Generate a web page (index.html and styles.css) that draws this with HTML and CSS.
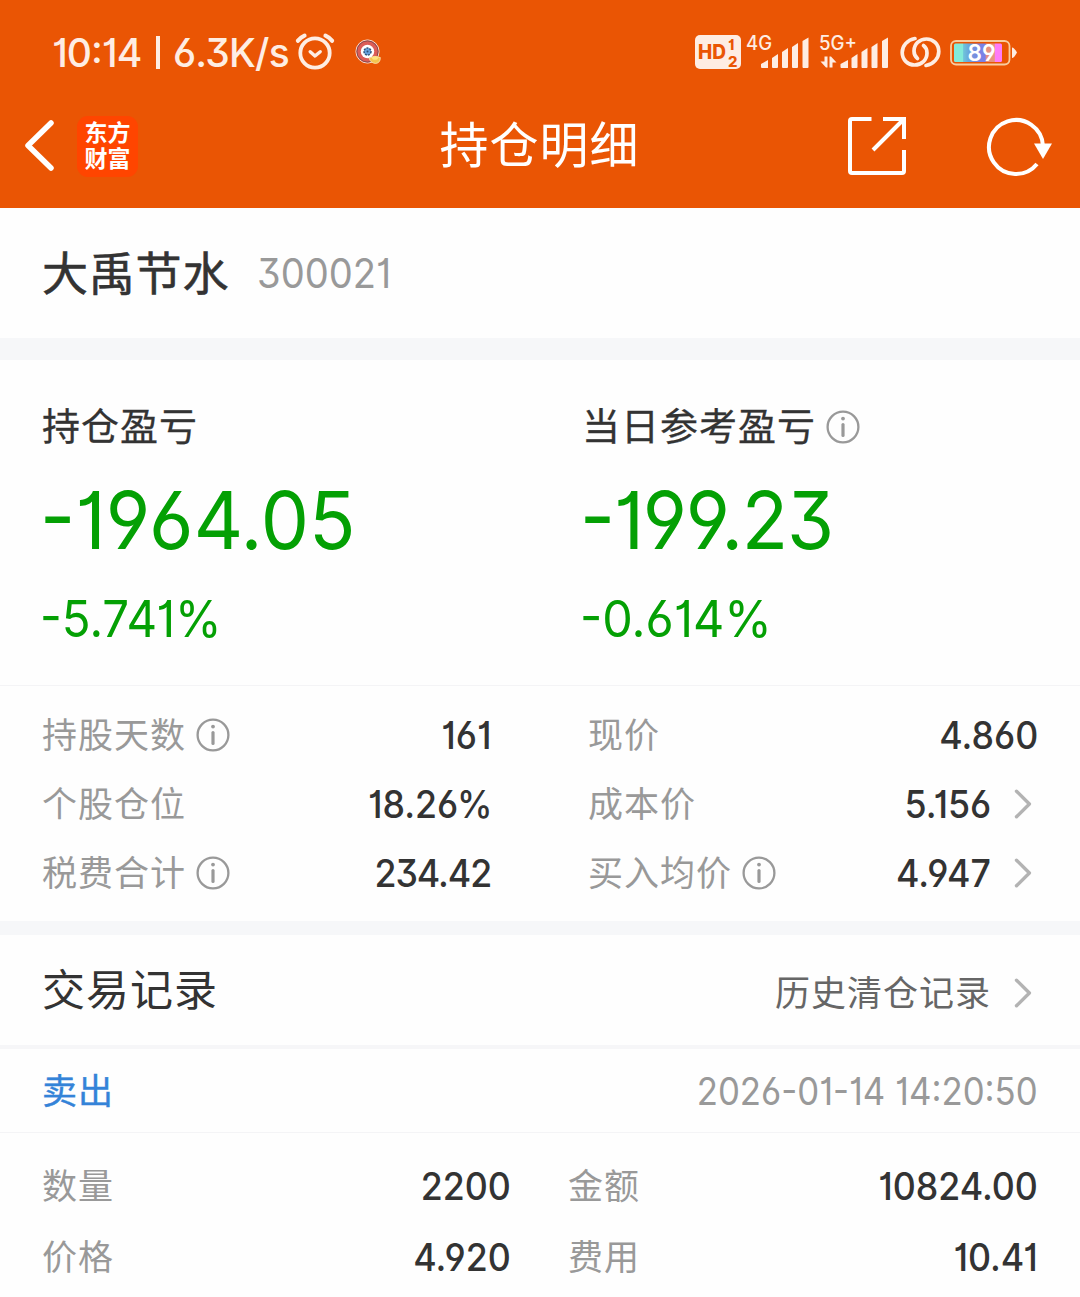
FILE: index.html
```html
<!DOCTYPE html>
<html lang="zh-CN">
<head>
<meta charset="utf-8">
<title>持仓明细</title>
<link rel="stylesheet" href="styles.css">
</head>
<body>
<svg width="0" height="0" class="defs">
  <symbol id="info" viewBox="0 0 34 34"><circle cx="17" cy="17" r="15.4" fill="none" stroke="#999" stroke-width="2.3"/><circle cx="17" cy="8.6" r="1.9" fill="#999"/><path d="M17 14.5V25.5" stroke="#999" stroke-width="3.2" stroke-linecap="round"/></symbol>
  <symbol id="chevron" viewBox="0 0 18 30"><path d="M2.5 2.2L15.4 15L2.5 27.8" fill="none" stroke="#b3b3b3" stroke-width="3.4" stroke-linecap="round" stroke-linejoin="round"/></symbol>
</svg>
<header class="header">
  <div class="status">
    <span class="clock">10:14</span><span class="divider"></span><span class="speed">6.3K/s</span>
    <svg class="alarm" width="40" height="40" viewBox="0 0 40 40" fill="none" stroke="#feede3" stroke-linecap="round" stroke-linejoin="round"><circle cx="20" cy="21" r="14.7" stroke-width="3.8"/><path d="M2.9 8.8Q5.3 5.4 9.5 3.6M37.1 8.8Q34.7 5.4 30.5 3.6" stroke-width="4.2"/><path d="M15.2 19.7L20 24L25.2 19.7" stroke-width="3.4"/></svg>
    <svg class="app" width="26" height="26" viewBox="0 0 26 26"><circle cx="12.5" cy="12.5" r="11.6" fill="#dc5d57" stroke="#f6d9cb" stroke-width="1"/><circle cx="12.5" cy="12.5" r="10.6" fill="none" stroke="#70464c" stroke-width=".8"/><circle cx="12.5" cy="12.5" r="6.7" fill="#fff"/><circle cx="12.5" cy="12.5" r="3.5" fill="#66a2df" stroke="#315578" stroke-width="1.5" stroke-dasharray="2 1"/><circle cx="12.5" cy="12.5" r="1" fill="#315578"/><path d="M14 19Q20 16 25.3 18.5Q25.5 24 20.5 24.5Q15.5 24 14 19Z" fill="#f3c551" stroke="#fae5b4" stroke-width=".8"/><ellipse cx="20" cy="19" rx="3" ry="1.8" fill="#ffe47d"/></svg>
    <div class="system">
      <svg width="46" height="40" viewBox="0 0 46 40"><rect y="3" width="46" height="34" rx="5" fill="#feede3"/><g fill="#ea5504" font-weight="800"><text x="3" y="27.3" font-size="19.5" textLength="28" lengthAdjust="spacingAndGlyphs">HD</text><text x="33.2" y="17.5" font-size="14">1</text><text x="33" y="34.5" font-size="14" textLength="9.5" lengthAdjust="spacingAndGlyphs">2</text></g></svg>
      <svg class="sig4" width="63" height="40" viewBox="0 0 63 40" fill="#feede3"><text x="0" y="17.5" font-size="19.5" font-weight="500" textLength="26" lengthAdjust="spacingAndGlyphs">4G</text><path d="M15 32L22 28V36H16Q15 36 15 35ZM26 26L32 22V35Q32 36 31 36H27Q26 36 26 35ZM36 20L42 16V35Q42 36 41 36H37Q36 36 36 35ZM46 15L52 11V35Q52 36 51 36H47Q46 36 46 35ZM56.5 9L62.5 5.5V35Q62.5 36 61.5 36H57.5Q56.5 36 56.5 35Z"/></svg>
      <svg class="sig5" width="70" height="40" viewBox="0 0 70 40" fill="#feede3"><text x="0" y="17.5" font-size="19.5" font-weight="500" textLength="38" lengthAdjust="spacingAndGlyphs">5G+</text><path d="M21.5 32L29 28V36H22.5Q21.5 36 21.5 35ZM32.5 26L38.5 22V35Q38.5 36 37.5 36H33.5Q32.5 36 32.5 35ZM42.5 20L48.5 16V35Q48.5 36 47.5 36H43.5Q42.5 36 42.5 35ZM52.5 15L58.5 11V35Q58.5 36 57.5 36H53.5Q52.5 36 52.5 35ZM63 9L69 5.5V35Q69 36 68 36H64Q63 36 63 35Z"/><path d="M1.5 29.5H5.5V24.5H8.5V35.5H7ZM10.5 35.5V24.5H12L17.5 30.5H13.5V35.5Z"/></svg>
      <svg class="link" width="42" height="40" viewBox="0 0 42 40" fill="none" stroke="#feede3" stroke-width="3.7" stroke-linecap="round"><path d="M15 6.5C7 8 2.2 14 2.2 20.5C2.2 28 8 33 14.5 33C21.5 33 27 28 27 21C27 17.5 25.5 15 23.5 13.5"/><path d="M26 33.5C34 32 38.8 26 38.8 19.5C38.8 12 33 7 26.5 7C19.5 7 14 12 14 19C14 22.5 15.5 25 17.5 26.5"/></svg>
      <svg class="battery" width="68" height="40" viewBox="0 0 68 40"><defs><linearGradient id="charge"><stop offset="0" stop-color="#83ead9"/><stop offset=".18" stop-color="#83ead9"/><stop offset=".2" stop-color="#6fc3da"/><stop offset=".3" stop-color="#68a9dc"/><stop offset=".48" stop-color="#7b86df"/><stop offset=".65" stop-color="#7980ea"/><stop offset=".67" stop-color="#e58f83"/><stop offset=".84" stop-color="#e6957e"/><stop offset=".86" stop-color="#ff7bf8"/></linearGradient></defs><rect x="1" y="9" width="58.5" height="23.5" rx="5" fill="none" stroke="#f8cda0" stroke-width="1.8"/><rect x="4" y="11.5" width="48" height="18.5" rx="1.5" fill="url(#charge)"/><path d="M62 15.5Q64 15.5 67 20.5Q64 26 62 26Z" fill="#feede3"/><text x="17.5" y="29" font-size="23.5" font-weight="600" fill="#fff" textLength="28" lengthAdjust="spacingAndGlyphs">89</text></svg>
    </div>
  </div>
  <nav class="nav">
    <div class="nav-left">
      <svg width="32" height="54" viewBox="0 0 32 54" fill="none" stroke="#fff" stroke-width="5.5" stroke-linejoin="round" stroke-linecap="round"><path d="M27 4L4 26.5L27 49"/></svg>
      <div class="logo"><span>东方</span><span>财富</span></div>
    </div>
    <h1>持仓明细</h1>
    <div class="nav-right">
      <svg width="58" height="58" viewBox="0 0 58 58" fill="none" stroke="#fff" stroke-width="4"><path d="M23.5 2H4Q2 2 2 4V54Q2 56 4 56H54Q56 56 56 54V33M35 2H56V22M55 3L25 33"/></svg>
      <svg width="66" height="58" viewBox="0 0 66 58"><path d="M50 47A27 27 0 1 1 56 29" fill="none" stroke="#fff" stroke-width="4"/><path d="M47 26.5H65L56 42Z" fill="#fff"/></svg>
    </div>
  </nav>
</header>
<section class="stock"><h2>大禹节水</h2><span class="code">300021</span></section>
<section class="summary">
  <div><h3>持仓盈亏</h3><p class="amount total">-1964.05</p><p class="percent total-rate">-5.741%</p></div>
  <div><h3>当日参考盈亏<svg class="info"><use href="#info"/></svg></h3><p class="amount daily">-199.23</p><p class="percent daily-rate">-0.614%</p></div>
</section>
<section class="metrics">
  <div class="cell"><span class="label">持股天数</span><svg class="info"><use href="#info"/></svg><b>161</b></div>
  <div class="cell"><span class="label">现价</span><b>4.860</b></div>
  <div class="cell"><span class="label">个股仓位</span><b class="ratio">18.26%</b></div>
  <div class="cell"><span class="label">成本价</span><b>5.156</b><svg class="chevron"><use href="#chevron"/></svg></div>
  <div class="cell"><span class="label">税费合计</span><svg class="info"><use href="#info"/></svg><b class="fees">234.42</b></div>
  <div class="cell"><span class="label">买入均价</span><svg class="info"><use href="#info"/></svg><b>4.947</b><svg class="chevron"><use href="#chevron"/></svg></div>
</section>
<section class="records"><h2>交易记录</h2><div class="history"><span>历史清仓记录</span><svg class="chevron"><use href="#chevron"/></svg></div></section>
<section class="trade-head"><span class="side">卖出</span><time>2026-01-14 14:20:50</time></section>
<section class="trade">
  <div class="cell"><span class="label">数量</span><b>2200</b></div>
  <div class="cell"><span class="label">金额</span><b>10824.00</b></div>
  <div class="cell"><span class="label">价格</span><b>4.920</b></div>
  <div class="cell"><span class="label">费用</span><b>10.41</b></div>
</section>
</body>
</html>
```

FILE: styles.css
```css
* { box-sizing: border-box; margin: 0; padding: 0; }
body {
  width: 1080px;
  height: 1297px;
  overflow: hidden;
  background: #fefefe;
  color: #333;
  font-family: Inter, "Noto Sans CJK SC", sans-serif;
  font-feature-settings: "case", "cv01", "cv03", "cv04", "cv09";
}
svg { display: block; flex: none; overflow: visible; }
.defs { position: absolute; }
h1, h2, h3 { font-weight: 400; }

.header { height: 208px; background: #ea5504; color: #fff; }
.status { display: flex; align-items: center; height: 104px; padding-left: 52px; color: #feede3; font-size: 39px; font-weight: 500; line-height: 48px; }
.clock { width: 104px; padding-top: 1px; white-space: nowrap; letter-spacing: -1px; }
.divider { width: 4px; height: 33px; background: #feede3; }
.speed { width: 122px; padding: 1px 0 0 13px; letter-spacing: -0.8px; white-space: nowrap; }
.alarm { margin-left: 13px; }
.app { margin-left: 20px; }
.system { display: flex; margin-left: auto; padding-right: 62px; }
.sig4 { margin-left: 5px; }
.sig5 { margin-left: 10px; }
.link { margin-left: 11px; }
.battery { margin-left: 8px; }

.nav { display: grid; grid-template-columns: 1fr auto 1fr; align-items: center; height: 84px; padding: 0 27px 0 24px; }
.nav-left { display: flex; align-items: center; gap: 21px; }
.nav-right { display: flex; justify-content: flex-end; gap: 81px; }
.nav h1 { padding-left: 2px; font-size: 49px; letter-spacing: 1px; line-height: 64px; }
.logo { display: flex; flex-direction: column; justify-content: center; align-items: center; width: 61px; height: 61px; border-radius: 11px; background: #ff4500; font-size: 23px; font-weight: 700; line-height: 26px; }

.stock { display: flex; align-items: center; height: 152px; padding: 0 42px; border-bottom: 22px solid #f6f7f9; }
.stock h2 { font-size: 46px; letter-spacing: 0.8px; line-height: 60px; -webkit-text-stroke: 0.6px #333; }
.code { margin-left: 28px; color: #999; font-size: 41px; font-weight: 400; line-height: 50px; transform: scaleX(0.93); transform-origin: left; }

.summary { display: grid; grid-template-columns: 1fr 1fr; height: 326px; padding-top: 40px; border-bottom: 1px solid #f4f4f6; }
.summary > div { padding-left: 42px; }
.summary h3 { display: flex; align-items: center; font-size: 38px; letter-spacing: 1px; line-height: 53px; -webkit-text-stroke: 0.3px #333; }
.info { width: 34px; height: 34px; margin-left: 10px; }
.amount, .percent { margin-left: -2px; color: #04a004; white-space: nowrap; transform-origin: left; }
.amount { margin-top: 20px; font-size: 80px; line-height: 93px; }
.percent { margin-top: 22px; font-size: 51px; line-height: 61px; }
.total { transform: scaleX(0.957); }
.daily { letter-spacing: -1.3px; transform: scaleX(0.95); }
.total-rate { transform: scaleX(0.93); }
.daily-rate { transform: scaleX(0.95); }

.metrics, .trade { display: grid; }
.metrics { grid-template: repeat(3, 69px) / 449px 450px; column-gap: 97px; height: 249px; padding: 14px 42px 0; border-bottom: 14px solid #f6f7f9; }
.cell { display: flex; align-items: center; }
.label { color: #999; font-size: 35px; letter-spacing: 1px; line-height: 50px; }
.cell b { margin-left: auto; font-size: 38px; font-weight: 500; line-height: 50px; transform: scaleX(0.94); transform-origin: right; }
.cell .ratio { margin-right: -1px; }
.cell .fees { letter-spacing: -1.1px; }
.chevron { width: 18px; height: 30px; margin: 0 6px 0 23px; }

.records { display: flex; align-items: center; justify-content: space-between; height: 114px; padding: 0 42px; border-bottom: 4px solid #f6f6f8; }
.records h2 { font-size: 43px; letter-spacing: 1px; line-height: 60px; }
.history { display: flex; align-items: center; padding-top: 5px; color: #666; font-size: 35px; letter-spacing: 1px; line-height: 50px; }

.trade-head { display: flex; align-items: center; justify-content: space-between; height: 84px; padding: 0 42px; border-bottom: 1px solid #f4f4f6; }
.side { color: #3483d8; font-size: 35px; letter-spacing: 1px; line-height: 50px; -webkit-text-stroke: 0.4px #3483d8; }
.trade-head time { color: #999; font-size: 38px; font-weight: 400; line-height: 50px; transform: scaleX(0.915); transform-origin: right; }

.trade { grid-template: repeat(2, 71px) / 469px 470px; column-gap: 57px; padding: 17px 42px 0; }
```
